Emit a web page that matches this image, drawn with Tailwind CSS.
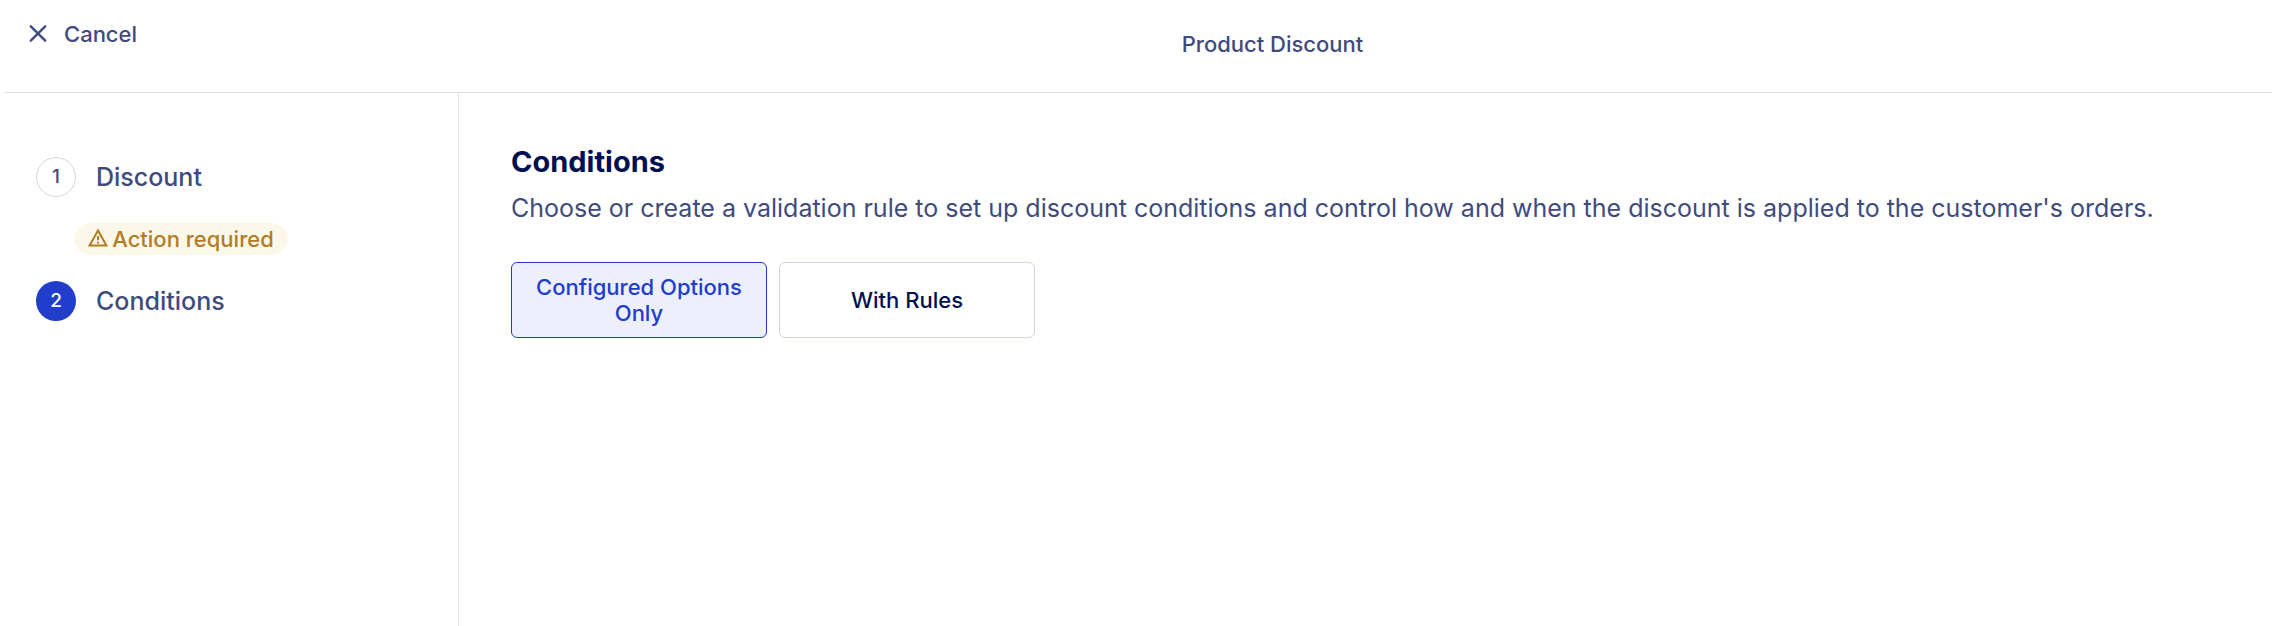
<!DOCTYPE html>
<html lang="en">
<head>
    <meta charset="UTF-8" />
    <meta name="viewport" content="width=device-width, initial-scale=1.0" />
    <title>Product Discount</title>
    <script src="https://cdn.jsdelivr.net/npm/@tailwindcss/browser@4"></script>
</head>
<body class="min-h-screen flex flex-col bg-white font-['Inter',sans-serif] text-[#3f4b7d]">
    <header class="ml-1 h-[93px] flex items-start border-b border-[#e0e1ea]">
        <button type="button" class="mt-4 ml-6 flex items-center gap-4 text-[22px] leading-9 font-medium">
            <svg class="size-5" viewBox="0 0 20 20" fill="none" stroke="currentColor" stroke-width="2.4" stroke-linecap="round" aria-hidden="true">
                <path d="M2.8 2.3l14.4 14.4M17.2 2.3L2.8 16.7" />
            </svg>
            Cancel
        </button>
        <h1 class="mt-[26px] flex-1 pl-[136px] text-center text-[22px] leading-9 font-medium">Product Discount</h1>
    </header>

    <div class="flex-1 flex">
        <nav class="w-[459px] shrink-0 border-r border-[#e0e1ea] pl-9 pt-16">
            <ol>
                <li>
                    <a href="#" class="flex items-center gap-5 text-[25px] leading-[38px] font-medium">
                        <span class="size-10 rounded-full border border-[#d3d3e2] text-[19px] flex items-center justify-center">1</span>
                        Discount
                    </a>
                    <div class="mt-[26px] ml-[38px] w-[214px] h-8 rounded-full bg-[#fcf8e9] text-[#b17c27] flex items-center justify-center gap-1 text-[22px] font-medium">
                        <svg class="size-5" viewBox="0 0 20 20" fill="none" stroke="currentColor" stroke-width="2" aria-hidden="true">
                            <path d="M10 1.4L1.6 16.4h16.8z" />
                            <path d="M10 7v4.2M10 12.8v1.8" />
                        </svg>
                        Action required
                    </div>
                </li>
                <li class="mt-[26px]">
                    <a href="#" class="flex items-center gap-5 text-[25px] leading-[38px] font-medium">
                        <span class="size-10 rounded-full bg-[#203dcc] text-white text-[19px] flex items-center justify-center">2</span>
                        Conditions
                    </a>
                </li>
            </ol>
        </nav>

        <main class="flex-1 pl-[52px] pt-[49px]">
            <h2 class="text-[29px] leading-10 font-bold text-[#00104f]">Conditions</h2>
            <p class="mt-[6px] text-[25px] leading-10">Choose or create a validation rule to set up discount conditions and control how and when the discount is applied to the customer's orders.</p>
            <div class="mt-[34px] flex gap-3">
                <button type="button" class="w-64 h-[76px] px-4 rounded-md border border-[#203dcc] bg-[#edeffc] text-[#203dcc] text-[22px] leading-[26px] font-medium">Configured Options Only</button>
                <button type="button" class="w-64 h-[76px] px-4 rounded-md border border-[#d3d3e2] text-[#00104f] text-[22px] leading-[26px] font-medium">With Rules</button>
            </div>
        </main>
    </div>
</body>
</html>
